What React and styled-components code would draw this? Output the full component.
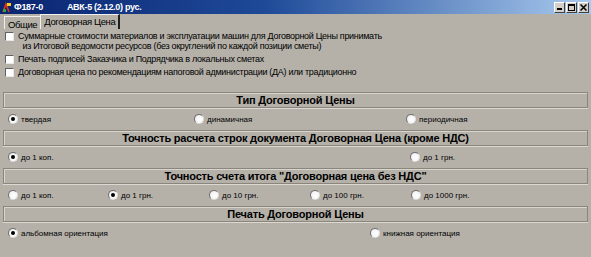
import React from 'react';
import styled, { createGlobalStyle, css } from 'styled-components';

const Global = createGlobalStyle`
  html, body { margin: 0; padding: 0; }
  body {
    background: #b5b1a9;
    font-family: "Liberation Sans", Arial, sans-serif;
    color: #000;
  }
`;

const Window = styled.div`
  width: 591px;
  height: 257px;
  background: #b5b1a9;
  overflow: hidden;
  display: flex;
  flex-direction: column;
`;

const TitleBar = styled.div`
  height: 14px;
  display: flex;
  align-items: center;
  padding: 0 2px;
  background: linear-gradient(to right, #0a2470 0%, #1e4a98 45%, #a9caee 100%);
  color: #fff;
  font-size: 9px;
  font-weight: bold;
  letter-spacing: -0.3px;
`;

const TitleText = styled.span`
  margin-left: ${(p) => p.gap}px;
  white-space: nowrap;
`;

const TitleButtons = styled.div`
  margin-left: auto;
  display: flex;
  gap: 1px;
`;

const TitleButton = styled.div`
  width: 9px;
  height: 9px;
  background: #d4d0c8;
  border: 1px solid;
  border-color: #fff #404040 #404040 #fff;
  display: flex;
  align-items: center;
  justify-content: center;
`;

const Tabs = styled.div`
  display: flex;
  align-items: flex-end;
  height: 15px;
  padding-left: 4px;
`;

const Tab = styled.div`
  font-size: 9.5px;
  letter-spacing: -0.4px;
  padding: 0 3px;
  white-space: nowrap;
  box-sizing: border-box;
  border-left: 1px solid #f2f0ec;
  border-top: 1px solid #f2f0ec;
  line-height: 14px;
  ${(p) =>
    p.active
      ? css`
          height: 15px;
          border-right: 2px solid #202020;
        `
      : css`
          height: 13px;
          line-height: 15px;
        `}
`;

const Body = styled.div`
  display: flex;
  flex-direction: column;
  padding: 2px 3px 0 3px;
`;

const Checks = styled.div`
  display: flex;
  flex-direction: column;
  gap: 3px;
  padding-left: 2px;
  margin-bottom: 15px;
`;

const CheckRow = styled.div`
  display: flex;
  align-items: flex-start;
  font-size: 9px;
  letter-spacing: -0.3px;
  line-height: 10px;
`;

const CheckBox = styled.span`
  width: 7px;
  height: 7px;
  flex: none;
  margin: 1px 4px 0 0;
  background: #fff;
  border: 1px solid;
  border-color: #606060 #e8e8e8 #e8e8e8 #606060;
`;

const CheckLabel = styled.span`
  white-space: pre;
`;

const SectionHeader = styled.div`
  height: 16px;
  box-sizing: border-box;
  border: 1px solid #8a867e;
  box-shadow: inset 1px 1px 0 #d8d5ce, 0 1px 0 #dcd9d2;
  display: flex;
  align-items: center;
  justify-content: center;
  font-size: 11px;
  letter-spacing: -0.2px;
  font-weight: bold;
  white-space: nowrap;
`;

const RadioRow = styled.div`
  height: 22px;
  display: grid;
  grid-template-columns: ${(p) => p.cols};
  align-items: center;
  padding-left: 5px;
`;

const RadioItem = styled.div`
  display: flex;
  align-items: center;
  font-size: 8px;
  white-space: nowrap;
`;

const RadioDot = styled.span`
  width: 8px;
  height: 8px;
  border-radius: 50%;
  flex: none;
  margin-right: 3px;
  background: radial-gradient(circle at 60% 60%, #fff 0%, #f4f4f4 60%, #cfcfcf 100%);
  border: 1px solid;
  border-color: #707070 #e0e0e0 #e0e0e0 #707070;
  display: flex;
  align-items: center;
  justify-content: center;
  &::after {
    content: '';
    width: 4px;
    height: 4px;
    border-radius: 50%;
    background: ${(p) => (p.checked ? '#000' : 'transparent')};
  }
`;

const AppIcon = () => (
  <svg width="10" height="11" viewBox="0 0 10 11">
    <path d="M1 10 L4 2 L7 10" stroke="#e03020" strokeWidth="1.6" fill="none" />
    <rect x="5" y="1" width="4" height="3" fill="#f0d020" />
    <rect x="1" y="7" width="3" height="3" fill="#30a040" />
  </svg>
);

const Radio = ({ label, checked }) => (
  <RadioItem>
    <RadioDot checked={checked} />
    {label}
  </RadioItem>
);

const sections = [
  {
    title: 'Тип Договорной Цены',
    cols: '186px 212px 1fr',
    items: ['твердая', 'динамичная', 'периодичная'],
    checked: 0,
  },
  {
    title: 'Точность расчета строк документа Договорная Цена (кроме НДС)',
    cols: '402px 1fr',
    items: ['до 1 коп.', 'до 1 грн.'],
    checked: 0,
  },
  {
    title: 'Точность счета итога "Договорная цена без НДС"',
    cols: '100px 101px 101px 101px 1fr',
    items: ['до 1 коп.', 'до 1 грн.', 'до 10 грн.', 'до 100 грн.', 'до 1000 грн.'],
    checked: 1,
  },
  {
    title: 'Печать Договорной Цены',
    cols: '362px 1fr',
    items: ['альбомная ориентация', 'книжная ориентация'],
    checked: 0,
  },
];

export default function App() {
  return (
    <Window>
      <Global />
      <TitleBar>
        <AppIcon />
        <TitleText gap={2}>Ф187-0</TitleText>
        <TitleText gap={24}>АВК-5 (2.12.0) рус.</TitleText>
        <TitleButtons>
          <TitleButton>
            <svg width="6" height="6" viewBox="0 0 6 6"><rect x="0" y="4" width="5" height="2" fill="#000" /></svg>
          </TitleButton>
          <TitleButton>
            <svg width="7" height="7" viewBox="0 0 7 7"><rect x="0.5" y="0.5" width="6" height="6" fill="none" stroke="#000" /><rect x="0" y="0" width="7" height="2" fill="#000" /></svg>
          </TitleButton>
          <TitleButton>
            <svg width="7" height="7" viewBox="0 0 7 7"><path d="M0.5 0.5 L6.5 6.5 M6.5 0.5 L0.5 6.5" stroke="#000" strokeWidth="1.5" /></svg>
          </TitleButton>
        </TitleButtons>
      </TitleBar>
      <Tabs>
        <Tab>Общие</Tab>
        <Tab active>Договорная Цена</Tab>
      </Tabs>
      <Body>
        <Checks>
          <CheckRow>
            <CheckBox />
            <CheckLabel>
              {'Суммарные стоимости материалов и эксплуатации машин для Договорной Цены принимать\n  из Итоговой ведомости ресурсов (без округлений по каждой позиции сметы)'}
            </CheckLabel>
          </CheckRow>
          <CheckRow>
            <CheckBox />
            <CheckLabel>Печать подписей Заказчика и Подрядчика в локальных сметах</CheckLabel>
          </CheckRow>
          <CheckRow>
            <CheckBox />
            <CheckLabel>Договорная цена по рекомендациям напоговой администрации (ДА) или традиционно</CheckLabel>
          </CheckRow>
        </Checks>
        {sections.map((s) => (
          <React.Fragment key={s.title}>
            <SectionHeader>{s.title}</SectionHeader>
            <RadioRow cols={s.cols}>
              {s.items.map((it, i) => (
                <Radio key={it} label={it} checked={i === s.checked} />
              ))}
            </RadioRow>
          </React.Fragment>
        ))}
      </Body>
    </Window>
  );
}
